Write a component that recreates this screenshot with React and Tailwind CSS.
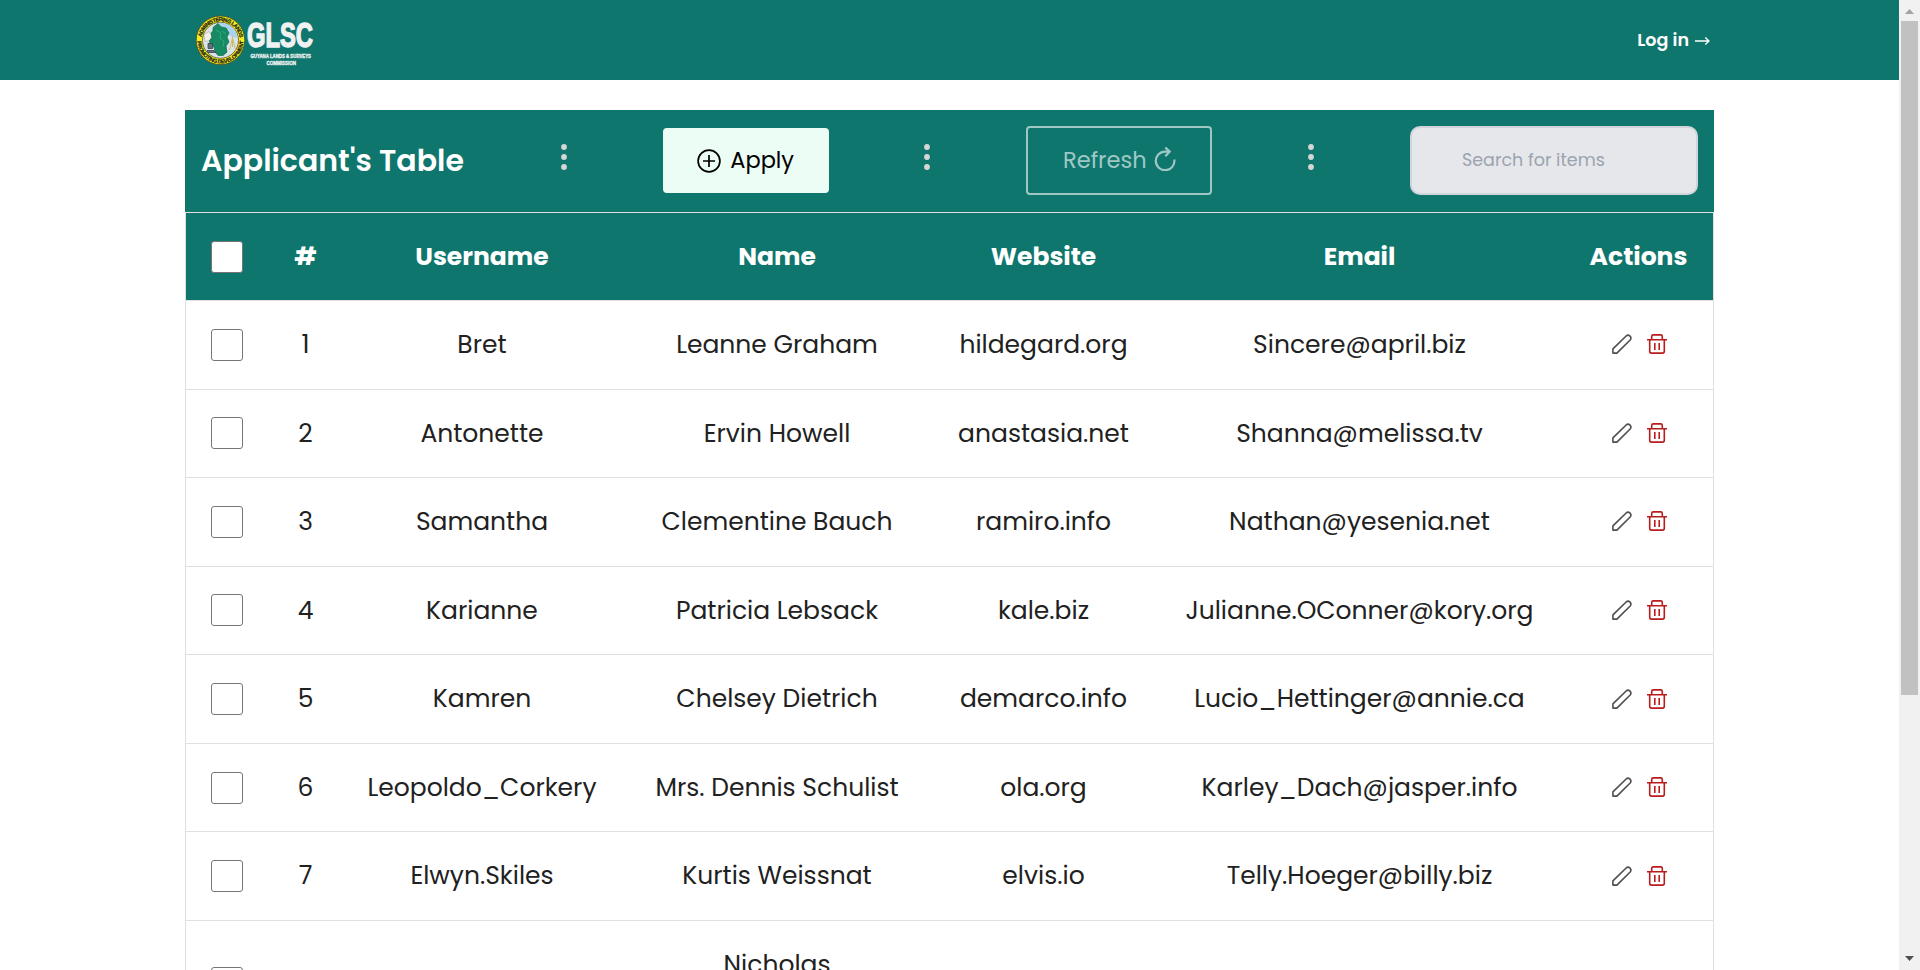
import React from "react";

const rows = [
  ["Bret", "Leanne Graham", "hildegard.org", "Sincere@april.biz"],
  ["Antonette", "Ervin Howell", "anastasia.net", "Shanna@melissa.tv"],
  ["Samantha", "Clementine Bauch", "ramiro.info", "Nathan@yesenia.net"],
  ["Karianne", "Patricia Lebsack", "kale.biz", "Julianne.OConner@kory.org"],
  ["Kamren", "Chelsey Dietrich", "demarco.info", "Lucio_Hettinger@annie.ca"],
  ["Leopoldo_Corkery", "Mrs. Dennis Schulist", "ola.org", "Karley_Dach@jasper.info"],
  ["Elwyn.Skiles", "Kurtis Weissnat", "elvis.io", "Telly.Hoeger@billy.biz"],
];

const grid = "grid grid-cols-[83px_73px_280px_310px_223px_409px_149px] items-center text-center";

function Logo() {
  return (
    <svg width="120" height="56" viewBox="0 0 120 56" className="block overflow-visible">
      <defs>
        <path id="arcTop" d="M5.400 30.500a19.200 19.200 0 1 1 38.200 0" />
        <path id="arcBottom" d="M1.400 28.300a23.100 23.100 0 0 0 46.200 0" />
      </defs>
      <circle cx="24.5" cy="28.3" r="24.3" fill="#f4ec1c" stroke="#4a4a20" strokeWidth="0.8" />
      <circle cx="24.5" cy="28.3" r="18" fill="#dce3ea" stroke="#55552a" strokeWidth="0.8" />
      <path d="M23 10.800a17.600 17.600 0 0 1 18.900 15L36 25l-8-6-5-5z" fill="#a9d4ec" />
      <path d="M8 22.500l5-3 3 4-2 5-5 1z" fill="#f3f1e6" stroke="#a09c90" strokeWidth="0.5" />
      <path d="M17 15.500l5-4 3 3.500 5 1 3 5-2 4 2 5-3 4 1 6-4 3.500h-5l-3-3.500-1-5-4-2.500-.5-4 2.500-3-1-4 2-3z" fill="#168a62" stroke="#0d6b50" strokeWidth="0.7" />
      <path d="M20 18l5 3-1 5 4 3-1 6M26 19l4 3" fill="none" stroke="#2fae7c" strokeWidth="0.9" />
      <path d="M12 31.500h4.500v5H12zM11 38.500h7l2 2h-8z" fill="#61707a" stroke="#39444d" strokeWidth="0.8" />
      <path d="M36.500 24v3M36.500 26l-3 12M36.500 26l3 12M36.500 26v9" stroke="#c8bd62" strokeWidth="1" fill="none" />
      <g fill="#23231a" stroke="#23231a" strokeWidth="0.200" fontFamily="Liberation Sans, sans-serif" fontWeight="700" fontSize="5.500" textAnchor="middle">
        <text letterSpacing="-0.600"><textPath href="#arcTop" startOffset="50%">ADMINISTERING LANDS</textPath></text>
        <text letterSpacing="-0.350"><textPath href="#arcBottom" startOffset="50%">PROMOTING DEVELOPMENT</textPath></text>
      </g>
      <g fill="#f0f2f2" stroke="#f0f2f2" fontFamily="Liberation Sans, sans-serif" fontWeight="700">
        <text x="51" y="35" fontSize="34.500" strokeWidth="1.500" textLength="66" lengthAdjust="spacingAndGlyphs">GLSC</text>
        <text x="54.500" y="46" fontSize="5.600" strokeWidth="0.350" textLength="60.500" lengthAdjust="spacingAndGlyphs">GUYANA LANDS &amp; SURVEYS</text>
        <text x="70.500" y="52.700" fontSize="5.600" strokeWidth="0.350" textLength="29.500" lengthAdjust="spacingAndGlyphs">COMMISSION</text>
      </g>
    </svg>
  );
}

function Dots() {
  return (
    <svg width="6" height="26" viewBox="0 0 6 26" fill="#d6d6d6" className="mb-[7px] block">
      <circle cx="3" cy="3" r="2.900" />
      <circle cx="3" cy="13" r="2.900" />
      <circle cx="3" cy="23" r="2.900" />
    </svg>
  );
}

function Checkbox() {
  return <div className="ml-[25px] h-8 w-8 rounded-[3px] border border-[#767676] bg-white" />;
}

function Pencil() {
  return (
    <svg width="20" height="20" viewBox="0 0 20 20" fill="none" stroke="#4f4f4f" strokeWidth="1.600" strokeLinejoin="round">
      <path d="M0.900 19.100V14.900L14.400 1.700a2.900 2.900 0 0 1 4 4L4.900 19.100z" />
    </svg>
  );
}

function Trash() {
  return (
    <svg width="20" height="20" viewBox="0 0 20 20" fill="none" stroke="#b91c1c" strokeWidth="1.600">
      <path d="M0 5.700h20M4.700 5.500V2.500Q4.700 0.900 6.300 0.900h7.400Q15.300 0.900 15.300 2.500v3M2.700 5.700v11.600q0 1.800 1.800 1.800h11q1.800 0 1.800-1.800V5.700M7.800 9v7M12.200 9v7" />
    </svg>
  );
}

function Scrollbar() {
  return (
    <div className="flex w-[21px] flex-col items-center bg-[#f1f1f1]">
      <div className="flex h-[21px] items-center pt-[2px]">
        <svg width="9" height="5" viewBox="0 0 9 5" fill="#a3a3a3"><path d="M0 5L4.500 0 9 5z" /></svg>
      </div>
      <div className="h-[674px] w-[17px] bg-[#c1c1c1]" />
      <div className="mt-auto pb-[9px]">
        <svg width="9" height="5" viewBox="0 0 9 5" fill="#505050" className="block"><path d="M0 0L4.500 5 9 0z" /></svg>
      </div>
    </div>
  );
}

export default function App() {
  return (
    <div className="flex h-[970px] w-[1920px] overflow-hidden bg-white font-['Poppins','Inter',sans-serif] text-[#212121]">
      <div className="min-w-0 flex-1">
        <header className="flex h-20 items-center justify-between bg-[#0f766e] pl-[196px] pr-[189px]">
          <Logo />
          <a className="flex items-center gap-[6px] pt-px text-[17.500px] font-semibold text-white">
            Log in
            <svg width="15" height="8" viewBox="0 0 15 8" fill="none" stroke="white" strokeWidth="1.300"><path d="M0 4h14M10.300 0.500L14 4l-3.700 3.500" /></svg>
          </a>
        </header>

        <main className="ml-[185px] mt-[30px] w-[1529px]">
          <div className="flex h-[102px] items-center justify-between bg-[#0f766e] pl-4 pr-4 pb-px">
            <h1 className="w-[264px] whitespace-nowrap text-[30px] font-semibold text-white">Applicant's Table</h1>
            <Dots />
            <button className="flex h-[65px] w-[166px] items-center justify-center gap-[9px] rounded bg-[#ecfdf5] text-[22.500px] text-black">
              <svg width="24" height="24" viewBox="0 0 24 24" fill="none" stroke="black" strokeWidth="1.700"><circle cx="12" cy="12" r="10.900" /><path d="M12 6v12M6 12h12" /></svg>
              Apply
            </button>
            <Dots />
            <button className="flex h-[69px] w-[186px] items-center justify-center gap-[7px] rounded border-2 border-[#9fc8c5] text-[22.500px] text-[#9fc8c5]">
              Refresh
              <svg width="22" height="24" viewBox="0 0 22 24" fill="none" stroke="#9fc8c5" strokeWidth="2.200" className="mb-1"><path d="M20.300 12.500A9.300 9.300 0 1 1 11 4.600H15.500M11.300 0.500L15.700 4.600l-4.400 4.600" /></svg>
            </button>
            <Dots />
            <div className="flex h-[69px] w-[288px] items-center rounded-[10px] border-2 border-[#d1d5db] bg-[#e5e7eb] pl-[50px] text-[17.500px] text-[#9ca3af]">
              Search for items
            </div>
          </div>

          <div className="border border-[#e0e0e0]">
            <div className={`${grid} h-[87px] bg-[#0f766e] text-[25px] font-bold text-white`}>
              <Checkbox />
              <span>#</span>
              <span>Username</span>
              <span>Name</span>
              <span>Website</span>
              <span>Email</span>
              <span>Actions</span>
            </div>
            {rows.map((row, i) => (
              <div key={row[0]} className={`${grid} h-[88.570px] border-t border-[#e0e0e0] text-[25px]`}>
                <Checkbox />
                <span>{i + 1}</span>
                {row.map((cell) => (
                  <span key={cell}>{cell}</span>
                ))}
                <div className="flex items-center justify-center gap-[15px] pb-px pl-px">
                  <Pencil />
                  <Trash />
                </div>
              </div>
            ))}
            <div className={`${grid} h-[125px] border-t border-[#e0e0e0] text-[25px]`}>
              <Checkbox />
              <span>8</span>
              <span>Maxime_Nienow</span>
              <span className="leading-9">Nicholas<br />Runolfsdottir V</span>
              <span>jacynthe.com</span>
              <span>Sherwood@rosamond.me</span>
            </div>
          </div>
        </main>
      </div>
      <Scrollbar />
    </div>
  );
}
